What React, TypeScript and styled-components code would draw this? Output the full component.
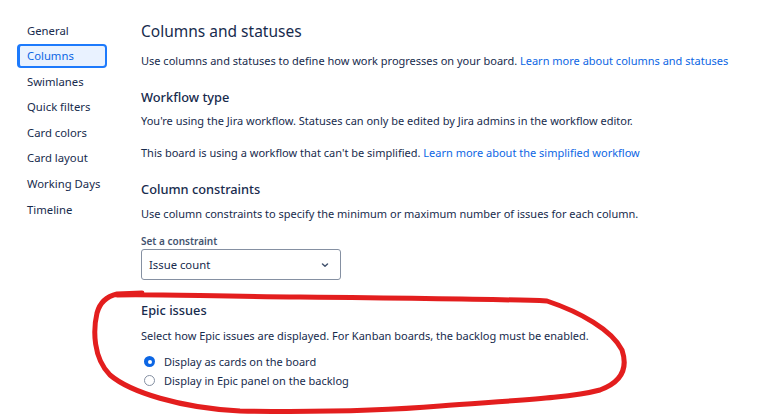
import React from "react";
import styled, { createGlobalStyle } from "styled-components";

const Global = createGlobalStyle`
  html, body { margin: 0; padding: 0; background: #ffffff; }
  body { font-family: "Noto Sans", "Open Sans", sans-serif; color: #172b4d; }
  * { box-sizing: border-box; }
`;

const Page = styled.div`
  position: relative;
  width: 777px;
  height: 419px;
  overflow: hidden;
  display: flex;
  background: #fff;
`;

const Sidebar = styled.nav`
  width: 141px;
  flex: none;
  padding: 18px 0 0 17px;
  display: flex;
  flex-direction: column;
  gap: 1.6px;
`;

const NavItem = styled.div<{ $active?: boolean }>`
  width: 90px;
  height: 24px;
  display: flex;
  align-items: center;
  font-size: 11.3px;
  color: ${(p) => (p.$active ? "#0c66e4" : "#172b4d")};
  background: ${(p) => (p.$active ? "#e9f2ff" : "transparent")};
  border: 2px solid ${(p) => (p.$active ? "#1d7afc" : "transparent")};
  border-left-width: ${(p) => (p.$active ? "3px" : "2px")};
  padding-left: ${(p) => (p.$active ? "7px" : "8px")};
  border-radius: 4px;
  white-space: nowrap;
`;

const Main = styled.main`
  flex: 1;
  padding-top: 19px;
  display: flex;
  flex-direction: column;
`;

const Title = styled.h1`
  margin: 0;
  font-size: 15.5px;
  font-weight: 400;
  line-height: 24px;
  color: #172b4d;
`;

const Heading = styled.h2<{ $mt: number }>`
  margin: ${(p) => p.$mt}px 0 0;
  font-size: 12.8px;
  font-weight: 500;
  line-height: 20px;
  color: #172b4d;
`;

const Text = styled.p<{ $mt: number }>`
  margin: ${(p) => p.$mt}px 0 0;
  font-size: 11px;
  line-height: 16px;
  color: #172b4d;
  white-space: nowrap;
`;

const Link = styled.a`
  color: #0c66e4;
  text-decoration: none;
`;

const Label = styled.div`
  margin-top: 12px;
  font-size: 10px;
  font-weight: 600;
  line-height: 14px;
  color: #44546f;
`;

const Select = styled.div`
  margin-top: 1px;
  width: 200px;
  height: 31px;
  border: 1px solid #8590a2;
  border-radius: 3px;
  display: flex;
  align-items: center;
  justify-content: space-between;
  padding: 0 10px 0 7px;
  font-size: 11.3px;
  color: #172b4d;
`;

const RadioGroup = styled.div`
  margin-top: 8px;
  display: flex;
  flex-direction: column;
  padding-left: 3px;
`;

const RadioRow = styled.label`
  height: 19px;
  display: flex;
  align-items: center;
  gap: 9px;
  font-size: 11px;
  color: #172b4d;
`;

const RadioDot = styled.span<{ $checked?: boolean }>`
  width: 11px;
  height: 11px;
  border-radius: 50%;
  flex: none;
  background: ${(p) => (p.$checked ? "#0c66e4" : "#fff")};
  border: ${(p) => (p.$checked ? "none" : "1px solid #8590a2")};
  display: flex;
  align-items: center;
  justify-content: center;
  &::after {
    content: "";
    width: 4px;
    height: 4px;
    border-radius: 50%;
    background: #fff;
    display: ${(p) => (p.$checked ? "block" : "none")};
  }
`;

const Annotation = styled.svg`
  position: absolute;
  left: 0;
  top: 0;
  pointer-events: none;
`;

const navItems = [
  "General",
  "Columns",
  "Swimlanes",
  "Quick filters",
  "Card colors",
  "Card layout",
  "Working Days",
  "Timeline",
];

export default function App() {
  return (
    <>
      <Global />
      <Page>
        <Sidebar>
          {navItems.map((n) => (
            <NavItem key={n} $active={n === "Columns"}>
              {n}
            </NavItem>
          ))}
        </Sidebar>
        <Main>
          <Title>Columns and statuses</Title>
          <Text $mt={10}>
            Use columns and statuses to define how work progresses on your board.{" "}
            <Link>Learn more about columns and statuses</Link>
          </Text>
          <Heading $mt={18}>Workflow type</Heading>
          <Text $mt={6}>
            You're using the Jira workflow. Statuses can only be edited by Jira admins in the workflow editor.
          </Text>
          <Text $mt={16}>
            This board is using a workflow that can't be simplified.{" "}
            <Link>Learn more about the simplified workflow</Link>
          </Text>
          <Heading $mt={18}>Column constraints</Heading>
          <Text $mt={7}>
            Use column constraints to specify the minimum or maximum number of issues for each column.
          </Text>
          <Label>Set a constraint</Label>
          <Select>
            <span>Issue count</span>
            <svg width="10" height="10" viewBox="0 0 10 10">
              <path d="M2.5 4 L5 6.3 L7.5 4" fill="none" stroke="#44546f" strokeWidth="1.5" strokeLinecap="round" strokeLinejoin="round" />
            </svg>
          </Select>
          <Heading $mt={20}>Epic issues</Heading>
          <Text $mt={8}>
            Select how Epic issues are displayed. For Kanban boards, the backlog must be enabled.
          </Text>
          <RadioGroup>
            <RadioRow>
              <RadioDot $checked />
              Display as cards on the board
            </RadioRow>
            <RadioRow>
              <RadioDot />
              Display in Epic panel on the backlog
            </RadioRow>
          </RadioGroup>
        </Main>
        <Annotation width="777" height="419" viewBox="0 0 777 419">
          <path
            d="M142 293 L117 294 C 108 296 100 302 97 313 C 93 330 93 358 110 375 C 130 392 180 408 240 411 C 300 412 380 411 440 406 C 520 400 570 398 600 390 C 622 382 628 368 622 350 C 612 330 580 312 547 301 C 500 299 400 298 300 297 C 200 296 150 294 117 295"
            fill="none"
            stroke="#e31e1e"
            strokeWidth="5"
            strokeLinecap="round"
            strokeLinejoin="round"
          />
        </Annotation>
      </Page>
    </>
  );
}
